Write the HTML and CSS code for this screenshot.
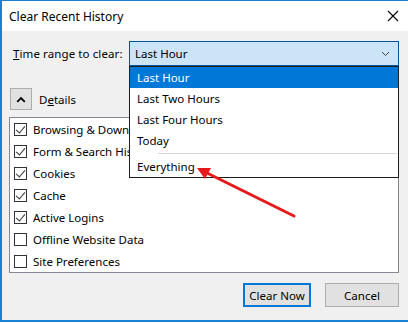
FILE: index.html
```html
<!DOCTYPE html>
<html>
<head>
<meta charset="utf-8">
<link rel="stylesheet" href="styles.css">
</head>
<body>
<div class="window">
  <div class="titlebar">
    <span class="title">Clear Recent History</span>
    <svg class="close" width="12" height="12" viewBox="0 0 12 12"><path d="M1 1 L11 11 M11 1 L1 11" stroke="#000" stroke-width="1.1" fill="none"/></svg>
  </div>
  <div class="content">
    <div class="range-row">
      <span class="label"><u>T</u>ime range to clear:</span>
      <div class="combo-wrap">
        <div class="combo">
          <span>Last Hour</span>
          <svg class="combo-arrow" width="9" height="6" viewBox="0 0 9 6"><path d="M1 1 L4.5 4.5 L8 1" stroke="#444" stroke-width="1" fill="none"/></svg>
        </div>
        <ul class="dropdown">
          <li class="item selected">Last Hour</li>
          <li class="item">Last Two Hours</li>
          <li class="item">Last Four Hours</li>
          <li class="item">Today</li>
          <li class="sep"></li>
          <li class="item">Everything</li>
        </ul>
      </div>
    </div>
    <div class="details-row">
      <button class="details-btn"><svg width="10" height="7" viewBox="0 0 10 7"><path d="M1.2 5.8 L5 2 L8.8 5.8" stroke="#000" stroke-width="1.8" fill="none"/></svg></button>
      <span class="details-label">D<u>e</u>tails</span>
    </div>
    <ul class="listbox">
      <li class="opt"><span class="cb checked"></span>Browsing &amp; Download History</li>
      <li class="opt"><span class="cb checked"></span>Form &amp; Search History</li>
      <li class="opt"><span class="cb checked"></span>Cookies</li>
      <li class="opt"><span class="cb checked"></span>Cache</li>
      <li class="opt"><span class="cb checked"></span>Active Logins</li>
      <li class="opt"><span class="cb"></span>Offline Website Data</li>
      <li class="opt"><span class="cb"></span>Site Preferences</li>
    </ul>
    <div class="buttons">
      <button class="btn default">Clear Now</button>
      <button class="btn">Cancel</button>
    </div>
  </div>
  <svg class="arrow" width="408" height="323" viewBox="0 0 408 323">
    <line x1="294" y1="216" x2="205" y2="172" stroke="#e8191b" stroke-width="3" stroke-linecap="round"/>
    <polygon points="197,168 211,168 205,179" fill="#e8191b"/>
  </svg>
</div>
</body>
</html>
```

FILE: styles.css
```css
* { box-sizing: border-box; }
html, body { margin: 0; padding: 0; }
body {
  width: 408px;
  height: 323px;
  background: #ffffff;
  font-family: "Noto Sans", "Open Sans", sans-serif;
  font-size: 11.5px;
  color: #000;
  overflow: hidden;
}
.window {
  position: relative;
  width: 408px;
  height: 322px;
  border-left: 2px solid #1c7fd6;
  border-top: 1px solid #1c7fd6;
  border-bottom: 2px solid #1c7fd6;
  display: flex;
  flex-direction: column;
}
.titlebar {
  height: 30px;
  background: #fff;
  display: flex;
  align-items: center;
  justify-content: space-between;
  padding: 0 9px 0 7px;
}
.title { font-size: 12px; }
.close { display: block; }
.content {
  flex: 1;
  background: #f0f0f0;
  padding: 10px 9px 0 7px;
  display: flex;
  flex-direction: column;
}
.range-row {
  display: flex;
  align-items: center;
  height: 25px;
}
.label {
  margin-left: 4px;
  width: 116px;
  letter-spacing: 0.1px;
}
.combo-wrap {
  position: relative;
  flex: 1;
  height: 25px;
}
.combo {
  height: 25px;
  background: #cce4f7;
  border: 1px solid #005499;
  display: flex;
  align-items: center;
  justify-content: space-between;
  padding: 0 8px 0 5px;
}
.combo-arrow { display: block; }
.dropdown {
  position: absolute;
  left: 0;
  right: 0;
  top: 25px;
  margin: 0;
  padding: 0;
  list-style: none;
  background: #fff;
  border: 1px solid #1e1e1e;
  z-index: 5;
}
.item {
  height: 21px;
  line-height: 21px;
  padding-left: 7px;
}
.item.selected {
  background: #0078d7;
  color: #fff;
}
.sep {
  margin-left: 28px;
  margin-right: 1px;
  border-bottom: 1px solid #d7d7d7;
  margin-bottom: 2px;
  height: 3px;
}
.details-row {
  display: flex;
  align-items: center;
  margin-top: 22px;
  height: 22px;
}
.details-btn {
  width: 22px;
  height: 22px;
  margin-left: 1px;
  background: #e1e1e1;
  border: 1px solid #adadad;
  display: flex;
  align-items: center;
  justify-content: center;
  padding: 0;
}
.details-btn svg { display: block; }
.details-label {
  margin-left: 7px;
}
.listbox {
  margin: 7px 0 0 0;
  padding: 0 0 0 4px;
  list-style: none;
  height: 156px;
  background: #fff;
  border: 1px solid #828790;
}
.opt {
  height: 22px;
  display: flex;
  align-items: center;
  white-space: nowrap;
}
.cb {
  width: 13px;
  height: 13px;
  border: 1px solid #333;
  background: #fff;
  margin-right: 6px;
  position: relative;
  flex: none;
}
.cb.checked::after {
  content: "";
  position: absolute;
  left: 3px;
  top: 0px;
  width: 4px;
  height: 8px;
  border-right: 1px solid #333;
  border-bottom: 1px solid #333;
  transform: rotate(40deg);
  transform-origin: center;
}
.buttons {
  display: flex;
  justify-content: flex-end;
  gap: 14px;
  margin-top: 10px;
}
.btn {
  height: 24px;
  font-family: inherit;
  font-size: 11.5px;
  background: #e1e1e1;
  border: 1px solid #adadad;
  padding: 0;
  color: #000;
}
.btn.default {
  width: 68px;
  border: 2px solid #0078d7;
}
.btn:not(.default) { width: 74px; }
.arrow {
  position: absolute;
  left: -2px;
  top: -1px;
  z-index: 10;
  pointer-events: none;
}
```
